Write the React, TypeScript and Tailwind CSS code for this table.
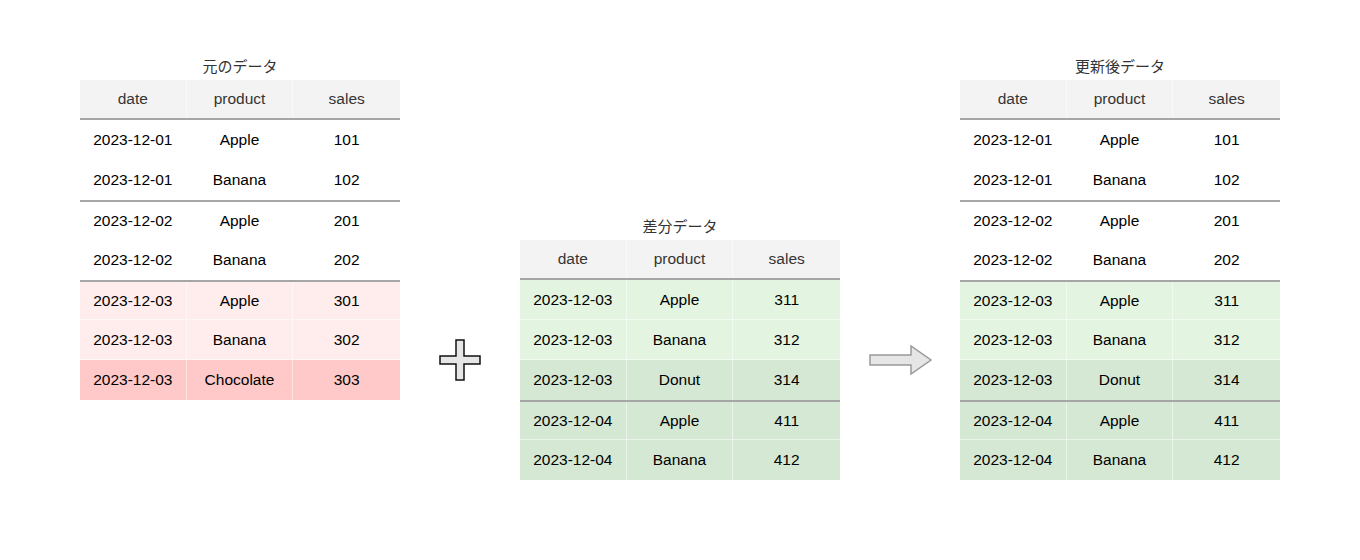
import React from "react";

type Row = { d: string; p: string; s: string; bg: string; top?: boolean };

const PL = "bg-[#ffecec]";
const PD = "bg-[#ffc9c9]";
const GL = "bg-[#e3f5e1]";
const GD = "bg-[#d5e8d4]";
const W = "bg-white";

function Table({ title, rows }: { title: string; rows: Row[] }) {
  return (
    <div className="w-[320px] flex flex-col">
      <div
        className="h-[20px] mb-[4px] flex items-center justify-center text-[15px] text-[#333]"
        style={{ fontFamily: '"Noto Sans CJK JP", "Liberation Sans", sans-serif' }}
      >
        {title}
      </div>
      <div className="grid grid-cols-3 h-[40px] bg-[#f3f3f3] border-b-2 border-[#a6a6a6] text-[#333]">
        {["date", "product", "sales"].map((h, i) => (
          <div
            key={h}
            className={`flex items-center justify-center ${i < 2 ? "border-r border-[#fafafa]" : ""}`}
          >
            {h}
          </div>
        ))}
      </div>
      {rows.map((r, idx) => (
        <div
          key={idx}
          className={`grid grid-cols-3 h-[40px] ${r.bg} ${r.top ? "border-t-2 border-[#a6a6a6]" : ""} text-black`}
        >
          {[r.d, r.p, r.s].map((c, i) => (
            <div
              key={i}
              className={`flex items-center justify-center ${i < 2 ? "border-r border-white/50" : ""} ${
                idx < rows.length - 1 && !rows[idx + 1].top && r.bg !== W ? "border-b border-b-white/50" : ""
              }`}
            >
              {c}
            </div>
          ))}
        </div>
      ))}
    </div>
  );
}

function Plus() {
  return (
    <svg width="42" height="42" viewBox="0 0 42 42">
      <path
        d="M17 1 H25 V17 H41 V25 H25 V41 H17 V25 H1 V17 H17 Z"
        fill="#e6e6e6"
        stroke="#111"
        strokeWidth="1.5"
        strokeLinejoin="miter"
      />
    </svg>
  );
}

function Arrow() {
  return (
    <svg width="64" height="30" viewBox="0 0 64 30">
      <path
        d="M1 10 H42 V1 L62 15 L42 29 V20 H1 Z"
        fill="#e6e6e6"
        stroke="#9a9a9a"
        strokeWidth="1.5"
        strokeLinejoin="miter"
      />
    </svg>
  );
}

export default function App() {
  const t1: Row[] = [
    { d: "2023-12-01", p: "Apple", s: "101", bg: W },
    { d: "2023-12-01", p: "Banana", s: "102", bg: W },
    { d: "2023-12-02", p: "Apple", s: "201", bg: W, top: true },
    { d: "2023-12-02", p: "Banana", s: "202", bg: W },
    { d: "2023-12-03", p: "Apple", s: "301", bg: PL, top: true },
    { d: "2023-12-03", p: "Banana", s: "302", bg: PL },
    { d: "2023-12-03", p: "Chocolate", s: "303", bg: PD },
  ];
  const t2: Row[] = [
    { d: "2023-12-03", p: "Apple", s: "311", bg: GL },
    { d: "2023-12-03", p: "Banana", s: "312", bg: GL },
    { d: "2023-12-03", p: "Donut", s: "314", bg: GD },
    { d: "2023-12-04", p: "Apple", s: "411", bg: GD, top: true },
    { d: "2023-12-04", p: "Banana", s: "412", bg: GD },
  ];
  const t3: Row[] = [
    { d: "2023-12-01", p: "Apple", s: "101", bg: W },
    { d: "2023-12-01", p: "Banana", s: "102", bg: W },
    { d: "2023-12-02", p: "Apple", s: "201", bg: W, top: true },
    { d: "2023-12-02", p: "Banana", s: "202", bg: W },
    { d: "2023-12-03", p: "Apple", s: "311", bg: GL, top: true },
    { d: "2023-12-03", p: "Banana", s: "312", bg: GL },
    { d: "2023-12-03", p: "Donut", s: "314", bg: GD },
    { d: "2023-12-04", p: "Apple", s: "411", bg: GD, top: true },
    { d: "2023-12-04", p: "Banana", s: "412", bg: GD },
  ];
  return (
    <div
      className="w-[1360px] h-[560px] bg-white flex items-start pl-[80px] text-[15.5px]"
      style={{ fontFamily: '"Liberation Sans", Arial, sans-serif' }}
    >
      <div className="mt-[56px]">
        <Table title="元のデータ" rows={t1} />
      </div>
      <div className="ml-[39px] mt-[339px]">
        <Plus />
      </div>
      <div className="ml-[39px] mt-[216px]">
        <Table title="差分データ" rows={t2} />
      </div>
      <div className="ml-[29px] mt-[345px]">
        <Arrow />
      </div>
      <div className="ml-[27px] mt-[56px]">
        <Table title="更新後データ" rows={t3} />
      </div>
    </div>
  );
}
